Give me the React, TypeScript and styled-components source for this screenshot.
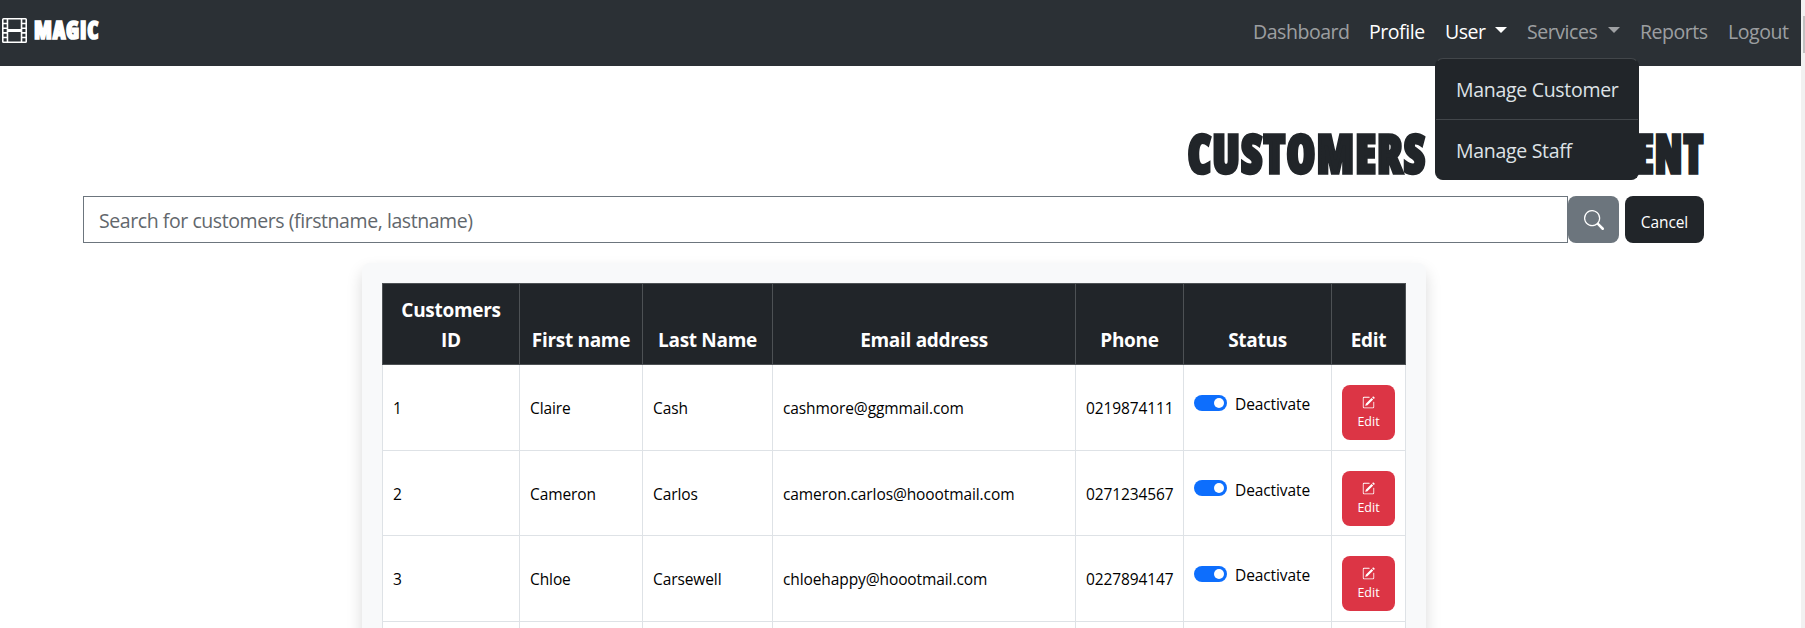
import React from "react";
import styled, { createGlobalStyle } from "styled-components";
import { BsFilm, BsPencilSquare, BsSearch } from "react-icons/bs";

const Global = createGlobalStyle`
  *, *::before, *::after { box-sizing: border-box; }
  body {
    margin: 0;
    height: 628px;
    overflow: hidden;
    background: #fff;
    color: #212529;
    font: 400 19.5px/30px "Open Sans", "Noto Sans", sans-serif;
  }
  button, input { font-family: inherit; }
`;

const Screen = styled.div`
  display: flex;
  height: 628px;
  overflow: hidden;
`;

const Page = styled.div`
  width: 1801px;
  height: 628px;
  overflow: hidden;
  flex: none;
`;

const ScrollTrack = styled.div`
  flex: 1;
  padding: 16px 0 0 2px;
  background: #f1f1f1;
`;

const ScrollThumb = styled.div`
  height: 37px;
  background: #c1c1c1;
`;

const Navbar = styled.nav`
  display: flex;
  justify-content: space-between;
  height: 66px;
  padding: 12px 10px 12px 2px;
  background: #2b3035;
`;

const Brand = styled.a`
  display: flex;
  align-items: center;
  gap: 7px;
  height: 37px;
  color: #fff;
`;

const Display = styled.span<{ $scale: number; $size: number; $origin: string }>`
  display: block;
  white-space: nowrap;
  font-family: "Open Sans", sans-serif;
  font-stretch: 75%;
  font-weight: 800;
  font-size: ${(p) => p.$size}px;
  letter-spacing: ${(p) => p.$size / 30}px;
  transform: scaleX(${(p) => p.$scale});
  transform-origin: ${(p) => p.$origin};
  -webkit-text-stroke: ${(p) => p.$size / 15}px currentColor;
`;

const BrandName = styled(Display)`
  margin-top: -4px;
`;

const NavList = styled.ul`
  display: flex;
  gap: 20px;
  margin: 0;
  padding: 5px 0 0;
  list-style: none;
`;

const NavItem = styled.li<{ $active?: boolean; $width: number }>`
  position: relative;
  display: flex;
  justify-content: space-between;
  width: ${(p) => p.$width}px;
  white-space: nowrap;
  letter-spacing: -0.45px;
  color: ${(p) => (p.$active ? "#fff" : "rgba(255, 255, 255, 0.55)")};
`;

const Caret = styled.i`
  width: 12px;
  height: 6px;
  margin-top: 10px;
  border: 6px solid transparent;
  border-top-color: currentColor;
  border-bottom: 0;
`;

const Menu = styled.div`
  position: absolute;
  z-index: 5;
  top: 41px;
  left: -10px;
  width: 204px;
  height: 122px;
  border: 1px solid #212529;
  border-top-color: #42464a;
  border-radius: 8px;
  background: #212529;
  color: #dee2e6;
  letter-spacing: -0.3px;
`;

const MenuItem = styled.div`
  height: 60px;
  padding: 16px 20px;
  & + & {
    height: 60px;
    border-top: 1px solid #42464a;
  }
`;

const Main = styled.main`
  width: 1621px;
  margin: 0 0 0 83px;
`;

const Title = styled.h1`
  display: flex;
  justify-content: flex-end;
  height: 130px;
  margin: 0;
  padding-top: 52px;
  line-height: 70px;
`;

const TitleWord = styled.span<{ $width: number }>`
  display: flex;
  width: ${(p) => p.$width}px;
  justify-content: flex-end;
`;

const SearchBar = styled.form`
  display: flex;
  height: 47px;
`;

const SearchInput = styled.input`
  flex: 1;
  padding: 2px 15px 0;
  border: 1px solid #6c757d;
  border-radius: 0;
  background: #fff;
  font-size: 19.5px;
  letter-spacing: -0.43px;
  &::placeholder {
    color: #62676c;
    opacity: 1;
  }
`;

const BarButton = styled.button<{ $bg: string; $width: number; $gap?: number; $drop?: number }>`
  display: flex;
  align-items: center;
  justify-content: center;
  width: ${(p) => p.$width}px;
  margin-left: ${(p) => p.$gap ?? 0}px;
  padding: ${(p) => p.$drop ?? 0}px 0 0;
  border: 0;
  border-radius: 8px;
  background: ${(p) => p.$bg};
  color: #fff;
  font-size: 15.5px;
  letter-spacing: -0.1px;
`;

const Card = styled.section`
  width: 1064px;
  height: 500px;
  margin: 20px 0 0 279px;
  padding: 20px;
  border-radius: 8px;
  background: #f8f9fa;
  box-shadow: 0 8px 16px rgba(0, 0, 0, 0.15);
`;

const Table = styled.table`
  width: 1023px;
  table-layout: fixed;
  border-collapse: collapse;
  background: #fff;
`;

const HeadCell = styled.th`
  height: 81px;
  padding: 11px 9px 9px;
  border: 1px solid #4d5154;
  background: #212529;
  color: #fff;
  vertical-align: bottom;
  font-size: 19px;
  font-weight: 700;
  line-height: 30px;
  letter-spacing: -0.3px;
`;

const Cell = styled.td`
  height: 85.6px;
  padding: 2px 10px 0;
  border: 1px solid #dee2e6;
  color: #000;
  font-size: 15.5px;
  line-height: 24px;
  letter-spacing: -0.1px;
  white-space: nowrap;
`;

const Switch = styled.label`
  display: flex;
  align-items: center;
  gap: 8px;
  margin-top: -8px;
`;

const SwitchTrack = styled.span`
  display: flex;
  justify-content: flex-end;
  width: 33px;
  height: 16px;
  margin-top: -3px;
  padding: 3px;
  border-radius: 8px;
  background: #0d6efd;
  &::after {
    content: "";
    width: 10px;
    height: 10px;
    border-radius: 50%;
    background: #fff;
  }
`;

const EditButton = styled.button`
  display: flex;
  flex-direction: column;
  align-items: center;
  width: 53px;
  height: 55px;
  margin-top: 9px;
  padding: 11px 0 0;
  border: 0;
  border-radius: 8px;
  background: #dc3545;
  color: #fff;
  font-size: 12.5px;
  line-height: 20px;
  gap: 3px;
`;

const columns = [
  { label: "Customers ID", width: 137 },
  { label: "First name", width: 123 },
  { label: "Last Name", width: 130 },
  { label: "Email address", width: 303 },
  { label: "Phone", width: 108 },
  { label: "Status", width: 148 },
  { label: "Edit", width: 74 },
];

const customers = [
  ["1", "Claire", "Cash", "cashmore@ggmmail.com", "0219874111"],
  ["2", "Cameron", "Carlos", "cameron.carlos@hoootmail.com", "0271234567"],
  ["3", "Chloe", "Carsewell", "chloehappy@hoootmail.com", "0227894147"],
];

export default function App() {
  return (
    <Screen>
      <Global />
      <Page>
        <Navbar>
          <Brand>
            <BsFilm size={25} />
            <BrandName $size={25.5} $scale={0.87} $origin="left">MAGIC</BrandName>
          </Brand>
          <NavList>
            <NavItem $width={96}>Dashboard</NavItem>
            <NavItem $active $width={56}>Profile</NavItem>
            <NavItem $active $width={62}>
              User <Caret />
              <Menu>
                <MenuItem>Manage Customer</MenuItem>
                <MenuItem>Manage Staff</MenuItem>
              </Menu>
            </NavItem>
            <NavItem $width={93}>Services <Caret /></NavItem>
            <NavItem $width={68}>Reports</NavItem>
            <NavItem $width={63}>Logout</NavItem>
          </NavList>
        </Navbar>
        <Main>
          <Title>
            <TitleWord $width={240}>
              <Display $size={53} $scale={0.87} $origin="right">CUSTOMERS</Display>
            </TitleWord>
            <TitleWord $width={278}>
              <Display $size={53} $scale={0.79} $origin="right">MANAGEMENT</Display>
            </TitleWord>
          </Title>
          <SearchBar>
            <SearchInput placeholder="Search for customers (firstname, lastname)" />
            <BarButton type="button" aria-label="Search" $bg="#6c757d" $width={51}>
              <BsSearch size={20} />
            </BarButton>
            <BarButton type="button" $bg="#212529" $width={79} $gap={6} $drop={4}>Cancel</BarButton>
          </SearchBar>
          <Card>
            <Table>
              <colgroup>
                {columns.map((c) => <col key={c.label} width={c.width} />)}
              </colgroup>
              <thead>
                <tr>{columns.map((c) => <HeadCell key={c.label}>{c.label}</HeadCell>)}</tr>
              </thead>
              <tbody>
                {customers.map((row) => (
                  <tr key={row[0]}>
                    {row.map((value) => <Cell key={value}>{value}</Cell>)}
                    <Cell><Switch><SwitchTrack />Deactivate</Switch></Cell>
                    <Cell><EditButton><BsPencilSquare size={13} />Edit</EditButton></Cell>
                  </tr>
                ))}
                <tr>{columns.map((c) => <Cell key={c.label} />)}</tr>
              </tbody>
            </Table>
          </Card>
        </Main>
      </Page>
      <ScrollTrack><ScrollThumb /></ScrollTrack>
    </Screen>
  );
}
